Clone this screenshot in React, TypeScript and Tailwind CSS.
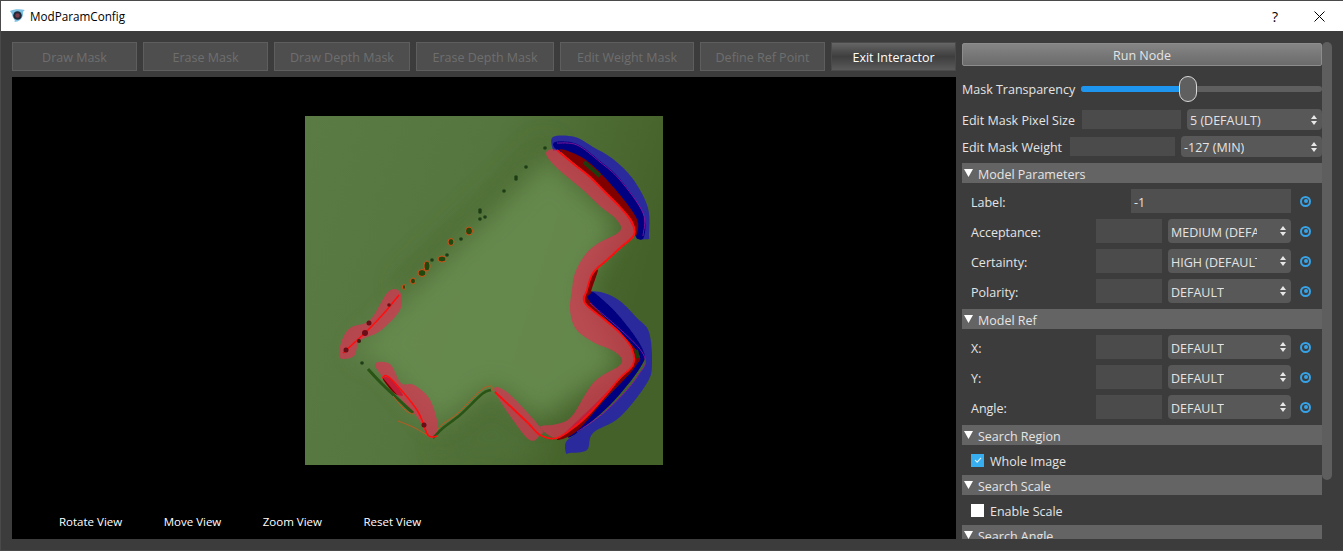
import React from "react";

type Pt = number[];

const tools = [
  { label: "Draw Mask", width: "w-[125px]" },
  { label: "Erase Mask", width: "w-[125px]" },
  { label: "Draw Depth Mask", width: "w-[136px]" },
  { label: "Erase Depth Mask", width: "w-[138px]" },
  { label: "Edit Weight Mask", width: "w-[134px]" },
  { label: "Define Ref Point", width: "w-[125px]" },
];

const specks = [
  [545, 148], [526, 167], [516, 177], [516, 179], [504, 191], [480, 210], [480, 212], [485, 217], [480, 219],
  [461, 239], [447, 255], [432, 260], [362, 363],
];

const blobs = [
  [469, 231, 3.5, 4], [451, 242, 3, 3.5], [442, 259, 4, 3], [427, 266, 3, 5], [422, 273, 4, 3.5], [413, 281, 2.5, 3], [404, 287, 1.5, 2.5],
];

function curve(points: Pt[], closed = false) {
  const n = points.length;
  const at = (i: number) => (closed ? points[(i + n) % n] : points[Math.min(n - 1, Math.max(0, i))]);
  let d = `M${points[0][0]} ${points[0][1]}`;
  const segments = closed ? n : n - 1;
  for (let i = 0; i < segments; i++) {
    const [p0, p1, p2, p3] = [at(i - 1), at(i), at(i + 1), at(i + 2)];
    const c1x = p1[0] + (p2[0] - p0[0]) / 6;
    const c1y = p1[1] + (p2[1] - p0[1]) / 6;
    const c2x = p2[0] - (p3[0] - p1[0]) / 6;
    const c2y = p2[1] - (p3[1] - p1[1]) / 6;
    d += ` C${c1x} ${c1y} ${c2x} ${c2y} ${p2[0]} ${p2[1]}`;
  }
  return closed ? d + " Z" : d;
}

const redTop: Pt[] = [[557, 150], [575, 165], [590, 177], [605, 192], [620, 207], [632, 222], [634, 235], [620, 248], [607, 260], [593, 273], [587, 290]];
const redBottom: Pt[] = [[585, 303], [605, 320], [620, 333], [632, 349], [633, 365], [620, 378], [605, 396], [590, 413], [577, 425], [557, 438], [540, 435], [527, 422], [495, 392]];

function Scan() {
  return (
    <svg viewBox="305 116 358 349" className="w-[358px] h-[349px] shrink-0">
      <defs>
        <linearGradient id="base" x1="0" y1="0" x2="1" y2="0.3">
          <stop offset="0" stopColor="#5b7b45" />
          <stop offset="0.5" stopColor="#55763e" />
          <stop offset="1" stopColor="#446129" />
        </linearGradient>
        <filter id="soft" x="-30%" y="-30%" width="160%" height="160%">
          <feGaussianBlur stdDeviation="12" />
        </filter>
        <filter id="edge" x="-5%" y="-5%" width="110%" height="110%">
          <feGaussianBlur stdDeviation="0.6" />
        </filter>
      </defs>
      <rect x="305" y="116" width="358" height="349" fill="url(#base)" />
      <path d="M550 146 L470 222 L400 290" stroke="#4c6b33" strokeWidth="16" fill="none" filter="url(#soft)" />
      <path d="M437 445 L492 400 L545 445 L510 462 L450 462 Z" fill="#4f6f38" filter="url(#soft)" />
      <path d="M548 158 L618 225 L582 290 L622 365 L540 420 L492 385 L436 425 L385 365 L352 352 L480 228 Z" fill="#678b50" opacity="0.9" filter="url(#soft)" />

      <g filter="url(#edge)">
        {/* blue bands */}
        <path d={curve([[553, 137], [575, 137], [593, 147], [613, 159], [633, 179], [648, 208], [649, 236], [649, 239], [637, 239], [637, 236], [637, 220], [620, 197], [600, 173], [583, 155], [557, 151], [553, 150]], true)} fill="#2b2a9c" />
        <path d={curve([[590, 292], [604, 293], [620, 301], [637, 318], [649, 332], [652, 363], [647, 383], [620, 417], [593, 433], [587, 450], [570, 453], [566, 453], [566, 442], [577, 433], [607, 410], [637, 377], [642, 353], [590, 303]], true)} fill="#2b2a9c" />
        <path d={curve([[555, 142], [577, 144], [600, 161], [620, 179], [643, 213], [644, 237], [636, 237], [632, 218], [605, 180], [580, 160], [557, 150]], true)} fill="#000080" />
        <path d={curve([[590, 293], [596, 294], [620, 317], [643, 350], [640, 368], [610, 405], [577, 433], [570, 434], [607, 397], [634, 367], [636, 350], [590, 302]], true)} fill="#000080" />
        {/* dark red shadow bands */}
        <path d={curve([[560, 150], [583, 158], [607, 180], [636, 217], [636, 236], [632, 225], [620, 207], [590, 177]], true)} fill="#800000" />
        <path d={curve([[587, 290], [591, 277], [598, 270], [591, 292], [591, 303], [636, 350], [635, 367], [607, 397], [577, 431], [557, 440], [570, 428], [607, 392], [632, 365], [632, 350], [620, 333], [585, 303]], true)} fill="#800000" />
        <path d={curve([[383, 379], [391, 379], [403, 395], [394, 393]], true)} fill="#800000" />
        <path d="M584 162 L600 176" stroke="#1f3d10" strokeWidth="4" fill="none" />
        <path d="M636 350 L638 358" stroke="#1f3d10" strokeWidth="4" fill="none" />
        {/* translucent pink mask */}
        <g fill="#e02f55" opacity="0.68">
          <path d={curve([...redTop, ...redBottom.slice(0, 10), [540, 427], [557, 424], [572, 416], [594, 382], [621, 364], [615, 352], [593, 342], [576, 329], [570, 310], [572, 290], [575, 273], [585, 255], [597, 244], [620, 231], [616, 219], [601, 207], [583, 190], [556, 167], [546, 153]], true)} />
          <path d={curve([[495, 392], [507, 392], [540, 427], [540, 435], [527, 438]], true)} />
          <path d={curve([[388, 292], [400, 292], [400, 310], [380, 331], [360, 341], [354, 356], [340, 358], [341, 343], [350, 328], [370, 320]], true)} />
          <path d={curve([[375, 365], [390, 364], [401, 383], [414, 385], [429, 398], [437, 420], [437, 436], [428, 436], [417, 417], [393, 390]], true)} />
        </g>
        {/* green shadow and orange outlines */}
        <path d={curve([[368, 369], [382, 384], [413, 413]])} stroke="#2a5314" strokeWidth="3" fill="none" />
        <path d={curve([[433, 438], [443, 428], [460, 415], [482, 394], [491, 390]])} stroke="#2a5314" strokeWidth="2.5" fill="none" />
        <path d={curve([[393, 396], [405, 410], [413, 414]])} stroke="#c2561f" strokeWidth="1" fill="none" />
        <path d={curve([[437, 430], [444, 423], [457, 414], [480, 391], [491, 386], [492, 391]])} stroke="#c2561f" strokeWidth="1" fill="none" />
        <path d={curve([[398, 421], [413, 427], [427, 435]])} stroke="#c2561f" strokeWidth="1" fill="none" />
        {/* red contour */}
        <path d={curve([...redTop, ...redBottom])} stroke="#ff1010" strokeWidth="1.8" fill="none" />
        <path d={curve([[343, 353], [368, 330], [385, 312], [399, 295]])} stroke="#ff1010" strokeWidth="1.6" fill="none" />
        <path d={curve([[382, 378], [390, 378], [417, 410], [428, 435], [437, 436]])} stroke="#ff1010" strokeWidth="1.6" fill="none" />
        <path d={curve([[557, 143], [577, 145], [600, 162], [620, 180], [643, 213], [643, 236]])} stroke="#a014a0" strokeWidth="0.8" fill="none" />
        <path d={curve([[590, 303], [642, 352], [637, 377], [607, 410], [577, 432]])} stroke="#a014a0" strokeWidth="0.8" fill="none" />
        {/* scan points */}
        {blobs.map(([x, y, rx, ry]) => (
          <ellipse key={`${x}-${y}`} cx={x} cy={y} rx={rx} ry={ry} fill="#234a10" stroke="#d2501a" strokeWidth="1" />
        ))}
        {specks.map(([x, y]) => (
          <circle key={`${x}-${y}`} cx={x} cy={y} r="1.8" fill="#1f3d12" />
        ))}
        <circle cx="346" cy="350" r="2.5" fill="#6b0f12" />
        <circle cx="369" cy="323" r="2.5" fill="#6b0f12" />
        <circle cx="365" cy="333" r="3" fill="#6b0f12" />
        <circle cx="359" cy="341" r="2" fill="#3a1a10" />
        <circle cx="389" cy="305" r="1.8" fill="#6b0f12" />
        <circle cx="424" cy="425" r="2.5" fill="#6b0f12" />
      </g>
    </svg>
  );
}

function Spinner() {
  return (
    <svg viewBox="0 0 6 10" className="w-[6px] h-[10px] shrink-0 fill-[#e8e8e8]">
      <path d="M3 0 L6 4 H0 Z M0 6 H6 L3 10 Z" />
    </svg>
  );
}

function Select({ value, width, textWidth = "w-auto" }: { value: string; width: string; textWidth?: string }) {
  return (
    <div className={`${width} h-full bg-[#585858] rounded-[4px] flex items-center justify-between pl-[3px] pr-[5px] shrink-0`}>
      <span className={`${textWidth} pt-[4px] overflow-hidden whitespace-nowrap`}>{value}</span>
      <Spinner />
    </div>
  );
}

function Radio() {
  return (
    <div className="w-[11px] h-[11px] rounded-full border-2 border-[#36a3e8] flex items-center justify-center shrink-0 ml-[8px]">
      <div className="w-[4px] h-[4px] rounded-full bg-[#36a3e8]" />
    </div>
  );
}

function Param({ label, value, textWidth }: { label: string; value: string; textWidth?: string }) {
  return (
    <div className="h-[24px] flex items-center pl-[9px] pr-[31px] mb-[6px] relative">
      <span className="flex-1 pt-[4px]">{label}</span>
      <div className="w-[66px] h-full bg-[#4b4b4b] mr-[6px] shrink-0" />
      <Select value={value} width="w-[123px]" textWidth={textWidth} />
      <div className="absolute right-[11px]">
        <Radio />
      </div>
    </div>
  );
}

function Section({ title }: { title: string }) {
  return (
    <div className="h-[20px] bg-[#646464] flex items-center gap-[5px] pl-[2px] shrink-0">
      <svg viewBox="0 0 9 8" className="w-[9px] h-[8px] fill-white shrink-0">
        <path d="M0 0 H9 L4.5 8 Z" />
      </svg>
      <span className="pt-[4px]">{title}</span>
    </div>
  );
}

export default function App() {
  return (
    <div
      className="w-[1343px] h-[551px] overflow-hidden bg-[#3c3c3c] flex flex-col text-[12.5px] text-[#e4e4e4] border-t border-b border-l border-[#4a4a4a]"
      style={{ fontFamily: '"Open Sans", "Noto Sans", sans-serif' }}
    >
      <div className="h-[30px] bg-white flex items-center shrink-0 text-black text-[11.7px] pl-[9px]">
        <svg viewBox="0 0 15 14" className="w-[15px] h-[14px] shrink-0">
          <path d="M0 2 C4 0 10 0 15 1 C13 2 13 3 13 6 C12 10 9 13 4 13 C7 12 2 9 2 5 Z" fill="#7cc0e2" />
          <circle cx="7.5" cy="6.5" r="4.3" fill="#1f2a38" />
          <circle cx="7.5" cy="6.5" r="2.2" fill="#7a3b4a" />
        </svg>
        <span className="ml-[5px] flex-1 pt-[2px]">ModParamConfig</span>
        <span className="text-[14px] mr-[36px]">?</span>
        <svg viewBox="0 0 11 11" className="w-[11px] h-[11px] stroke-black fill-none mr-[18px]">
          <path d="M0.5 0.5 L10.5 10.5 M10.5 0.5 L0.5 10.5" />
        </svg>
      </div>

      <div className="flex flex-1 min-h-0 pl-[11px] pt-[11px]">
        <div className="w-[944px] shrink-0 h-[508px] flex flex-col">
          <div className="h-[29px] flex gap-[6px] shrink-0">
            {tools.map((t) => (
              <button key={t.label} className={`${t.width} shrink-0 pt-[4px] bg-[#4e4e4e] border border-[#5e5e5e] text-[#6e6e6e]`}>
                {t.label}
              </button>
            ))}
            <button className="w-[125px] shrink-0 pt-[4px] border border-[#4a4a4a] text-white bg-gradient-to-b from-[#666666] via-[#3e3e3e] to-[#5a5a5a]">
              Exit Interactor
            </button>
          </div>
          <div className="mt-[6px] h-[462px] bg-black flex flex-col items-center pt-[39px]">
            <Scan />
            <div className="self-start mt-[48px] pl-[47px] flex gap-[41.5px] text-[11.5px] text-white">
              <span>Rotate View</span>
              <span>Move View</span>
              <span>Zoom View</span>
              <span>Reset View</span>
            </div>
          </div>
        </div>

        <div className="w-[360px] ml-[6px] shrink-0 h-[497px] overflow-hidden flex flex-col">
          <button className="h-[23px] mt-[1px] pt-[3px] shrink-0 rounded-[2px] border border-[#8c8c8c] bg-gradient-to-b from-[#858585] to-[#6b6b6b]">Run Node</button>
          <div className="h-[26px] mt-[10px] flex items-center shrink-0 relative">
            <span className="w-[119px] shrink-0 pt-[2px]">Mask Transparency</span>
            <div className="flex-1 h-[6px] rounded-full bg-[#5f5f5f] relative">
              <div className="w-[100px] h-full rounded-l-full bg-[#1e96f0]" />
              <div className="absolute left-[98px] top-[-10px] w-[18px] h-[26px] rounded-[9px] bg-[#5f5f5f] border border-[#d8d8d8]" />
            </div>
          </div>
          <div className="h-[21px] mt-[7px] flex items-center shrink-0">
            <span className="w-[120px] shrink-0 pt-[4px]">Edit Mask Pixel Size</span>
            <div className="w-[99px] h-[19px] bg-[#4b4b4b] shrink-0" />
            <div className="ml-[6px] h-full">
              <Select value="5 (DEFAULT)" width="w-[135px]" />
            </div>
          </div>
          <div className="h-[21px] mt-[6px] flex items-center shrink-0">
            <span className="w-[108px] shrink-0 pt-[4px]">Edit Mask Weight</span>
            <div className="w-[105px] h-[19px] bg-[#4b4b4b] shrink-0" />
            <div className="ml-[6px] h-full">
              <Select value="-127 (MIN)" width="w-[141px]" />
            </div>
          </div>
          <div className="mt-[6px]">
            <Section title="Model Parameters" />
          </div>
          <div className="pt-[6px] shrink-0">
            <div className="h-[24px] flex items-center pl-[9px] mb-[6px] relative">
              <span className="flex-1 pt-[4px]">Label:</span>
              <div className="w-[160px] h-full bg-[#4f4f4f] mr-[31px] pl-[3px] flex items-center shrink-0">
                <span className="pt-[4px]">-1</span>
              </div>
              <div className="absolute right-[11px]">
                <Radio />
              </div>
            </div>
            <Param label="Acceptance:" value="MEDIUM (DEFAULT)" textWidth="w-[86px]" />
            <Param label="Certainty:" value="HIGH (DEFAULT)" textWidth="w-[86px]" />
            <Param label="Polarity:" value="DEFAULT" />
          </div>
          <Section title="Model Ref" />
          <div className="pt-[6px] shrink-0">
            <Param label="X:" value="DEFAULT" />
            <Param label="Y:" value="DEFAULT" />
            <Param label="Angle:" value="DEFAULT" />
          </div>
          <Section title="Search Region" />
          <div className="h-[30px] flex items-center pl-[9px] gap-[6px] shrink-0">
            <div className="w-[13px] h-[13px] bg-[#36aef0] flex items-center justify-center shrink-0">
              <svg viewBox="0 0 9 7" className="w-[8px] h-[6px] stroke-[#e8f6ff] fill-none">
                <path d="M1 3.5 L3.5 6 L8 1" strokeWidth="1.2" />
              </svg>
            </div>
            <span className="pt-[4px]">Whole Image</span>
          </div>
          <Section title="Search Scale" />
          <div className="h-[30px] flex items-center pl-[9px] gap-[6px] shrink-0">
            <div className="w-[13px] h-[13px] bg-white shrink-0" />
            <span className="pt-[4px]">Enable Scale</span>
          </div>
          <Section title="Search Angle" />
        </div>

        <div className="w-[10px] h-[438px] rounded-full bg-[#5e5e5e] shrink-0" />
      </div>
    </div>
  );
}
